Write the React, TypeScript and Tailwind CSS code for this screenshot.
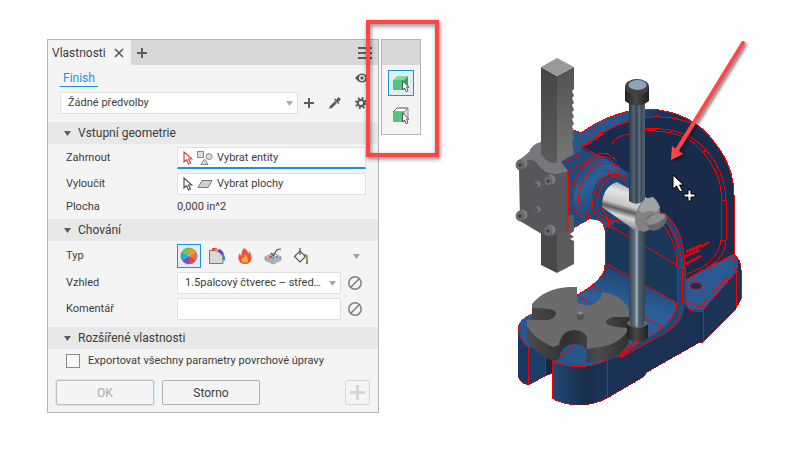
import { useState, type ReactNode } from 'react';

const DISC =
  'M577 287 L577 302 Q583 306 590 305 Q601 303 602 292 Q621 294 629 310 L629 317 L613 317 Q605 319 606 323 Q608 327 629 328 Q624 340 606 346 L587 349 L587 337 Q583 330 574 330 Q561 331 559 345 L553 347 Q533 338 527 326 L527 320 L548 320 Q556 318 556 313 Q555 308 532 308 L532 304 Q544 289 568 287 Z';

const Arrow = ({ className = '' }: { className?: string }) => (
  <svg viewBox="0 0 7 5" className={`h-[5px] w-[7px] ${className}`} aria-hidden="true">
    <path d="M0 0h7L3.500 5z" fill="currentColor" />
  </svg>
);

const Pointer = ({ color }: { color: string }) => (
  <svg viewBox="0 0 10 14" className="h-3.5 w-2.5 shrink-0" aria-hidden="true">
    <path
      d="M1 1v10l2.500-2.300 2 4.300 2-1-2-4h3.300z"
      fill="#fff"
      stroke={color}
      strokeWidth="1.200"
    />
  </svg>
);

const Section = ({ title, children }: { title: string; children: ReactNode }) => {
  const [open, setOpen] = useState(true);

  return (
    <section>
      <h2>
        <button
          type="button"
          aria-expanded={open}
          onClick={() => setOpen(!open)}
          className="flex h-[22px] w-full items-center gap-[7px] bg-[#e8e8e8] pl-4 text-[12px] text-[#3c3c3c]"
        >
          <Arrow className="text-[#5a5a5a]" />
          {title}
        </button>
      </h2>
      {open && children}
    </section>
  );
};

const Clear = () => (
  <button type="button" aria-label="Vymazat" className="ml-[7px] shrink-0 text-[#808080]">
    <svg viewBox="0 0 14 14" className="size-3.5" fill="none" stroke="currentColor" strokeWidth="1.500">
      <circle cx="7" cy="7" r="6.200" />
      <path d="M2.800 11.200l8.400-8.400" />
    </svg>
  </button>
);

const ColorWheel = () => (
  <svg viewBox="0 0 18 18" className="size-[18px]">
    <path d="M9 9V1a8 8 0 0 1 7 4z" fill="#f59a2c" />
    <path d="M9 9l7-4a8 8 0 0 1 0 8z" fill="#f4702f" />
    <path d="M9 9l7 4a8 8 0 0 1-7 4z" fill="#e0405a" />
    <path d="M9 9v8a8 8 0 0 1-7-4z" fill="#7b4fc0" />
    <path d="M9 9l-7 4a8 8 0 0 1 0-8z" fill="#1fb0c4" />
    <path d="M9 9L2 5a8 8 0 0 1 7-4z" fill="#7cc04d" />
    <circle cx="9" cy="9" r="8" fill="none" stroke="#777" strokeWidth=".6" />
  </svg>
);

const Coating = () => (
  <svg viewBox="0 0 18 18" className="size-[18px]" fill="none">
    <path d="M1.500 3.500H6q9 1 9 10v3H1.500z" fill="#d9d9d9" stroke="#777" />
    <path d="M4 2.500q3-1 5 0" stroke="#e8443a" strokeWidth="2.500" />
    <path d="M7 2.500q3 .5 4.500 2" stroke="#f5a52c" strokeWidth="2" />
    <path d="M10.500 3q3 1.500 4 4" stroke="#6c3fd0" strokeWidth="3" />
    <path d="M14.500 6.500q1.700 3 1.800 7" stroke="#2a8fe0" strokeWidth="2" />
  </svg>
);

const Flame = () => (
  <svg viewBox="0 0 16 18" className="h-[18px] w-4">
    <path
      d="M7 1q4 2 4 6 1-1 1-3 3 3 2.500 8-1 5-6.500 5T1.500 12Q1 9 3 6q0 2 1.500 3Q4 4 7 1z"
      fill="#e9543c"
    />
    <path d="M8 7q3 3 3 6t-3 3-3.500-3Q5 11 6 10l1 1q0-2 1-4z" fill="#f9a13a" />
  </svg>
);

const Engrave = () => (
  <svg viewBox="0 0 18 18" className="size-[18px]" fill="none">
    <path d="M1 10l8-4 8 4-8 5z" fill="#e4e4e4" stroke="#888" strokeWidth=".8" />
    <path d="M1 10v3l8 4 8-4v-3l-8 4z" fill="#b5b5b5" stroke="#888" strokeWidth=".7" />
    <path d="M3.500 10L7 8l2 2-2 2z" fill="#e85454" />
    <path d="M7 12l2-2 3 1-3 2z" fill="#38b7b0" />
    <path d="M10 10l3-1 2 1-2 1z" fill="#4b72d8" />
    <path d="M7 6l2.500 3L12 4q1-2 5-2" stroke="#555" strokeWidth="1.200" />
  </svg>
);

const Paint = () => (
  <svg viewBox="0 0 18 18" className="size-[18px]" fill="none">
    <path d="M2.500 9.500L8 4l5.500 5.500L8 15z" fill="#f4f4f4" stroke="#555" strokeWidth="1.200" />
    <path d="M8 1v7M12 8h3" stroke="#555" strokeWidth="1.200" />
    <path d="M15 8v3" stroke="#f08a2a" strokeWidth="2" />
    <path d="M15 11v3" stroke="#40c090" strokeWidth="2" />
    <path d="M15 14v3" stroke="#e9543c" strokeWidth="2" />
  </svg>
);

const finishTypes = [
  { label: 'Vzhled', icon: <ColorWheel /> },
  { label: 'Povlak', icon: <Coating /> },
  { label: 'Tepelné zpracování', icon: <Flame /> },
  { label: 'Textura', icon: <Engrave /> },
  { label: 'Nátěr', icon: <Paint /> },
];

const Header = () => (
  <header>
    <div className="flex h-[25px] items-stretch bg-[#d8d8d8]">
      <div className="flex items-center gap-2 bg-[#f4f4f4] pr-[7px] pl-1">
        <span className="text-[12px]">Vlastnosti</span>
        <button type="button" aria-label="Zavřít">
          <svg viewBox="0 0 10 10" className="size-2.5" stroke="#5c5c5c" strokeWidth="1.700">
            <path d="M1 1l8 8M9 1L1 9" />
          </svg>
        </button>
      </div>
      <button type="button" aria-label="Nová karta" className="px-1.5">
        <svg viewBox="0 0 10 10" className="size-2.5" stroke="#5c5c5c" strokeWidth="2">
          <path d="M5 0v10M0 5h10" />
        </svg>
      </button>
      <button type="button" aria-label="Nabídka" className="mr-[6px] ml-auto">
        <svg viewBox="0 0 14 12" className="h-3 w-3.5" stroke="#5c5c5c" strokeWidth="2">
          <path d="M0 1h14M0 6h14M0 11h14" />
        </svg>
      </button>
    </div>
    <div className="flex h-[27px] items-start justify-between pr-[9px] pl-3">
      <a
        href="#finish"
        className="mt-1 h-[18px] border-b border-[#1496d8] pr-[3px] pl-[3px] text-[12px] leading-[18px] text-[#1496d8]"
      >
        Finish
      </a>
      <button type="button" aria-label="Náhled" className="mt-2">
        <svg viewBox="0 0 14 10" className="h-2.5 w-3.5">
          <path d="M0 5Q7-4 14 5 7 14 0 5z" fill="#5c5c5c" />
          <circle cx="7" cy="5" r="3" fill="#f4f4f4" />
          <circle cx="7" cy="5" r="1.800" fill="#5c5c5c" />
        </svg>
      </button>
    </div>
    <div className="flex items-center pr-[11px] pb-2 pl-3">
      <div className="relative min-w-0 flex-1">
        <select
          aria-label="Předvolby"
          className="h-[22px] w-full appearance-none border border-[#e0e0e0] bg-white pl-[7px]"
        >
          <option>Žádné předvolby</option>
        </select>
        <Arrow className="pointer-events-none absolute top-[9px] right-[5px] text-[#a8a8a8]" />
      </div>
      <button type="button" aria-label="Přidat předvolbu" className="ml-[6px]">
        <svg viewBox="0 0 10 10" className="size-2.5" stroke="#5c5c5c" strokeWidth="2">
          <path d="M5 0v10M0 5h10" />
        </svg>
      </button>
      <button type="button" aria-label="Kapátko" className="ml-[15px]">
        <svg viewBox="0 0 12 12" className="size-3" fill="#5c5c5c">
          <path d="M0 12l1-3 5-5 2 2-5 5z" />
          <path d="M5 2.500l4.500 4.500 1-1-1.200-1.200L12 2.500 9.500 0 7.200 2.700 6 1.500z" />
        </svg>
      </button>
      <button type="button" aria-label="Nastavení" className="ml-[14px]">
        <svg viewBox="0 0 12 12" className="size-3" fill="none" stroke="#5c5c5c">
          <circle cx="6" cy="6" r="3.200" strokeWidth="2.200" />
          <circle cx="6" cy="6" r="5" strokeWidth="2" strokeDasharray="2 1.930" />
        </svg>
      </button>
    </div>
  </header>
);

const PropertiesPanel = () => {
  const [type, setType] = useState('Vzhled');

  return (
    <form className="border border-[#b4b6b6] bg-[#f4f4f4]" onSubmit={(e) => e.preventDefault()}>
      <Header />
      <Section title="Vstupní geometrie">
        <div className="grid grid-cols-[111px_1fr] items-center gap-y-1 pt-[3px] pr-3 pb-[5px] pl-[18px]">
          <span id="include">Zahrnout</span>
          <button
            type="button"
            aria-labelledby="include include-value"
            className="flex h-[22px] items-center gap-1 border border-b-2 border-[#e0e0e0] border-b-[#1496d8] bg-white pl-[5px]"
          >
            <Pointer color="#e8443a" />
            <svg viewBox="0 0 16 14" className="h-3.5 w-4" fill="#dcdcdc" stroke="#8a8a8a">
              <rect x=".5" y=".5" width="6" height="6" />
              <circle cx="12" cy="5.500" r="3" />
              <path d="M7.500 8l3.500 5.500H4z" />
            </svg>
            <span id="include-value">Vybrat entity</span>
          </button>
          <span id="exclude">Vyloučit</span>
          <button
            type="button"
            aria-labelledby="exclude exclude-value"
            className="flex h-[22px] items-center gap-1 border border-[#e0e0e0] bg-white pl-[5px]"
          >
            <Pointer color="#555" />
            <svg viewBox="0 0 16 14" className="h-3.5 w-4" fill="#d0d0d0" stroke="#777">
              <path d="M5 3.500h10l-4 7H1z" />
            </svg>
            <span id="exclude-value">Vybrat plochy</span>
          </button>
          <span className="leading-[15px]">Plocha</span>
          <output className="leading-[15px]">0,000 in^2</output>
        </div>
      </Section>
      <Section title="Chování">
        <div className="grid grid-cols-[111px_1fr] items-center gap-y-1 pt-[3px] pr-3 pb-[7px] pl-[18px]">
          <span id="type">Typ</span>
          <div className="flex items-center" role="group" aria-labelledby="type">
            <div className="flex gap-1">
              {finishTypes.map(({ label, icon }) => (
                <button
                  key={label}
                  type="button"
                  aria-label={label}
                  aria-pressed={type === label}
                  onClick={() => setType(label)}
                  className={`flex size-6 items-center justify-center border ${
                    type === label ? 'border-[#1496d8] bg-[#e2eef6]' : 'border-transparent'
                  }`}
                >
                  {icon}
                </button>
              ))}
            </div>
            <button type="button" aria-label="Další typy" className="mr-[6px] ml-auto">
              <Arrow className="text-[#a0a0a0]" />
            </button>
          </div>
          <label htmlFor="appearance">Vzhled</label>
          <div className="flex items-center pr-1">
            <div className="relative min-w-0 flex-1">
              <select
                id="appearance"
                className="h-[22px] w-full appearance-none border border-[#e0e0e0] bg-white pl-[7px]"
              >
                <option>1.5palcový čtverec – střed…</option>
              </select>
              <Arrow className="pointer-events-none absolute top-[9px] right-[5px] text-[#a8a8a8]" />
            </div>
            <Clear />
          </div>
          <label htmlFor="comment">Komentář</label>
          <div className="flex items-center pr-1">
            <input
              id="comment"
              type="text"
              className="h-[22px] min-w-0 flex-1 border border-[#e0e0e0] bg-white px-[7px]"
            />
            <Clear />
          </div>
        </div>
      </Section>
      <Section title="Rozšířené vlastnosti">
        <label className="flex items-center gap-2 pt-1 pl-[18px]">
          <input type="checkbox" className="size-3.5 appearance-none border border-[#8a8a8a] bg-[#f8f8f8] checked:bg-[#1496d8]" />
          Exportovat všechny parametry povrchové úpravy
        </label>
      </Section>
      <footer className="flex gap-2 px-2 pt-[11px] pb-[7px]">
        <button
          type="submit"
          disabled
          className="h-[25px] max-w-[98px] flex-1 rounded-xs border border-[#bcbfc1] text-[12px] text-[#a9a9a9] ring-1 ring-[#d5e8f2]"
        >
          OK
        </button>
        <button type="button" className="h-[25px] max-w-[98px] flex-1 rounded-xs border border-[#b0b0b0] text-[12px]">
          Storno
        </button>
        <button
          type="button"
          disabled
          aria-label="Použít a vytvořit nový"
          className="ml-auto flex size-[25px] items-center justify-center rounded-xs border border-[#d6d6d6]"
        >
          <svg viewBox="0 0 15 15" className="size-[15px]" stroke="#d6d6d6" strokeWidth="3">
            <path d="M7.500 0v15M0 7.500h15" />
          </svg>
        </button>
      </footer>
    </form>
  );
};

const Cube = ({ solid }: { solid?: boolean }) => (
  <svg viewBox="0 0 18 18" className="size-[18px]">
    {solid ? (
      <>
        <path d="M1 6l4-4h11l-4 4z" fill="#82d9a0" />
        <path d="M12 6l4-4v9l-4 5z" fill="#35a65f" />
      </>
    ) : (
      <>
        <path d="M1 6l4-4h11l-4 4z" fill="#fff" stroke="#555" />
        <path d="M12 6l4-4v9l-4 5z" fill="#e0e0e0" stroke="#777" strokeWidth=".8" />
      </>
    )}
    <path d="M1 6h11v10H1z" fill="#53c67c" />
    <path d="M10.500 7v9l2-2 1.500 3.500 2-.8-1.500-3.500H17z" fill="#fff" stroke="#444" strokeWidth=".9" />
  </svg>
);

const SelectionToolbar = () => (
  <div className="relative">
    <div className="border border-[#b4b6b6] bg-[#f4f4f4]" role="toolbar" aria-label="Výběr">
      <div className="h-[25px] bg-[#d8d8d8]" />
      <div className="flex flex-col items-center gap-[6px] pt-[5px] pb-[6px]">
        <button
          type="button"
          aria-label="Těleso"
          className="flex size-[26px] items-center justify-center border border-[#1496d8] bg-[#e2eef6]"
        >
          <Cube solid />
        </button>
        <button type="button" aria-label="Plocha" className="flex size-[26px] items-center justify-center">
          <Cube />
        </button>
      </div>
    </div>
    <div className="pointer-events-none absolute -top-[19px] -left-[15px] h-[137px] w-[73px] border-4 border-[#ff4545] drop-shadow-[1px_2px_2px_rgba(0,0,0,0.5)]" />
  </div>
);

const Bolt = ({ x, y, r = 5 }: { x: number; y: number; r?: number }) => (
  <g>
    <ellipse cx={x + r / 2} cy={y - r / 4} rx={r} ry={r} fill="#7c7d80" />
    <ellipse cx={x} cy={y} rx={r - 1} ry={r} fill="#6c6d70" stroke="#525356" strokeWidth=".6" />
    <circle cx={x} cy={y} r={r / 3} fill="#3c3d40" />
  </g>
);

const ArborPress = () => (
  <svg viewBox="421 39 379 411" className="h-auto w-full" role="img" aria-label="Model lisu">
    <defs>
      <linearGradient id="post">
        <stop offset="0" stopColor="#2d3742" />
        <stop offset=".3" stopColor="#526473" />
        <stop offset=".5" stopColor="#34424f" />
        <stop offset=".62" stopColor="#64758a" />
        <stop offset=".75" stopColor="#3d4c59" />
        <stop offset="1" stopColor="#53616d" />
      </linearGradient>
      <linearGradient id="postLow">
        <stop offset="0" stopColor="#35424e" />
        <stop offset=".35" stopColor="#5f707e" />
        <stop offset=".5" stopColor="#a9b8c4" />
        <stop offset=".6" stopColor="#506270" />
        <stop offset="1" stopColor="#35434f" />
      </linearGradient>
      <linearGradient id="rackLeft" x1="0" y1="0" x2="0" y2="1">
        <stop offset="0" stopColor="#454545" />
        <stop offset="1" stopColor="#5b5b5b" />
      </linearGradient>
      <linearGradient id="rackRight" x1="0" y1="0" x2="0" y2="1">
        <stop offset="0" stopColor="#515151" />
        <stop offset="1" stopColor="#777" />
      </linearGradient>
      <linearGradient id="hub" x1="0" y1="0" x2=".7" y2="1">
        <stop offset="0" stopColor="#1c3c68" />
        <stop offset=".4" stopColor="#2c6099" />
        <stop offset="1" stopColor="#1a365d" />
      </linearGradient>
      <linearGradient id="shaft" x1=".6" y1="0" x2=".3" y2="1">
        <stop offset="0" stopColor="#8e8e8e" />
        <stop offset=".25" stopColor="#e4e4e4" />
        <stop offset=".48" stopColor="#c6c6c6" />
        <stop offset=".58" stopColor="#5c5c5c" />
        <stop offset=".7" stopColor="#d8d8d8" />
        <stop offset="1" stopColor="#555" />
      </linearGradient>
      <linearGradient id="base">
        <stop offset="0" stopColor="#204a78" />
        <stop offset=".6" stopColor="#172d4a" />
        <stop offset="1" stopColor="#1b3459" />
      </linearGradient>
      <linearGradient id="floor" x1=".7" y1="0" x2=".3" y2="1">
        <stop offset="0" stopColor="#1c3f6a" />
        <stop offset=".35" stopColor="#2d5f99" />
        <stop offset="1" stopColor="#275487" />
      </linearGradient>
      <linearGradient id="rim" x1="0" x2="1">
        <stop offset="0" stopColor="#2a568b" />
        <stop offset=".45" stopColor="#29568c" />
        <stop offset=".65" stopColor="#1c3458" />
        <stop offset="1" stopColor="#172d4d" />
      </linearGradient>
      <linearGradient id="collar">
        <stop offset="0" stopColor="#222" />
        <stop offset=".45" stopColor="#474747" />
        <stop offset="1" stopColor="#202020" />
      </linearGradient>
      <linearGradient id="discSide">
        <stop offset="0" stopColor="#4b4b4b" />
        <stop offset=".4" stopColor="#303030" />
        <stop offset=".7" stopColor="#4a4a4a" />
        <stop offset="1" stopColor="#303030" />
      </linearGradient>
      <filter id="soft" x="-30%" y="-30%" width="160%" height="160%">
        <feDropShadow dx="2" dy="2" stdDeviation="1.500" floodOpacity=".5" />
      </filter>
    </defs>

    {/* casting */}
    <g strokeLinejoin="round">
      <path
        d="M530 150L545 140L574 130L581 133Q615 109 650 109Q693 112 715 143Q734 167 734 195V254Q741 260 741 270V299L735 310L703 342L698 343L647 372L643 377L607 398Q594 405 579 405Q560 404 552 398V373L545 376L528 385Q519 382 518 375V328Q520 319 532 314L577 295Q605 281 605 265V230Q603 217 589 219L568 231Z"
        fill="url(#rim)"
        stroke="#f00"
        shapeRendering="crispEdges"
      />
      <path
        d="M581 148L596 138Q625 118 650 117Q693 117 713 145Q730 165 733 195V253L685 279L650 240L628 180Z"
        fill="#182d4d"
      />
      <path d="M645 128Q690 126 712 155Q724 175 726 198V241Q724 258 707 266L685 277V250Q682 222 660 212L645 200Z" fill="#182b4b" />
      <path d="M605 228L629 215Q650 208 662 219Q677 239 677 265V303L645 286L605 266Z" fill="#1a3859" />
      <path d="M532 314Q519 319 518 328L528 347L552 361Q579 372 607 360L641 342Q676 326 677 303L645 286L605 266Q604 281 577 295Z" fill="url(#floor)" />
      <path d="M518 328Q521 342 528 347V385Q519 382 518 375Z" fill="#1a3962" />
      <path d="M528 347L545 352V376L528 385Z" fill="#1b3e69" />
      <path d="M545 352L552 361V373L545 376Z" fill="#152844" />
      <path d="M552 361Q579 373 607 360V398Q579 412 552 398Z" fill="url(#base)" />
      <path d="M607 360L641 346Q683 327 684 300V278L703 310V342L698 343L647 372L643 377L607 398Z" fill="#1a3154" />
      <path d="M677 303V265Q677 232 660 216L664 212Q685 230 685 265V303Q685 320 669 332L620 357L607 360L641 342Q677 325 677 303Z" fill="#204774" />
      <path d="M685 280L734 254Q741 260 735 273L704 310Q686 313 685 301Z" fill="#2b5a92" />
      <path d="M703 310L735 273L741 266V299L735 310L703 342Z" fill="#1a3356" />
      <ellipse cx="696" cy="286" rx="6" ry="3.500" fill="#18304f" stroke="#f00" />
    </g>

    {/* upper bore and hub */}
    <path d="M555 167L582 150L600 155L618 165L629 175V225L609 222L589 219L568 231V172Z" fill="#204b7b" />
    <path d="M574 197Q576 168 600 157L629 173V217L609 221Q602 217 589 217Q574 216 574 197Z" fill="url(#hub)" />
    <path d="M592 203Q590 178 615 173L630 180V225L609 220Q592 217 592 203Z" fill="#1e4675" />

    <g fill="none" stroke="#f40000" strokeWidth="1" shapeRendering="crispEdges">
      <path d="M592 127L603 134M581 147L605 131Q630 118 653 117Q677 116 695 125M590 143L582 147L600 156M603 134L590 143" />
      <path d="M612 144Q616 136 629 134M645 129Q685 126 706 150Q725 171 726 200V240Q725 256 712 265L687 279" />
      <path d="M645 131Q684 129 703 152Q720 173 721 192V240Q719 256 703 267L685 275M721 200h5M721 240h5M711 264v6M706 150l-4 3" />
      <path d="M557 167L582 153M568 231V172L597 155Q607 149 617 162" />
      <path d="M618 171Q612 155 600 157Q582 163 575 182Q570 207 578 215Q583 218 588 219" />
      <path d="M617 167Q606 158 591 170Q576 187 579 204Q582 211 588 213V219" />
      <path d="M628 178Q612 170 603 178Q593 189 592 207Q594 218 608 220" />
      <path d="M628 183Q616 171 605 182Q597 194 597 206Q598 216 609 219" />
      <path d="M602 207Q605 217 611 222L620 220M608 220h5v7h-5zM603 169h5v2h-5z" />
      <path d="M605 223L677 265M605 263L677 303M605 223V267Q603 281 577 295L592 304M592 286L602 292" />
      <path d="M645 318L665 328M677 303V267Q677 239 660 222M682 303V267Q681 235 661 218M685 303V267Q684 224 660 212M677 267h8M677 303h5" />
      <path d="M677 303Q676 323 640 342L620 357M682 303Q683 321 665 333L620 358M620 358L631 343M620 355L635 342" />
      <path d="M685 280L734 254Q740 262 736 272L703 310V342M732 257Q740 265 731 273L700 307M686 300L702 308M686 303Q688 314 703 311M736 272V308" />
      <path d="M518 328Q521 343 528 347V385M545 352V376M552 398V361Q579 373 607 360V398M607 360L622 350M552 361L569 351Q573 347 572 342" />
    </g>
    <g stroke="#f00" strokeDasharray="3 .5">
      <path d="M686 252L702 245" strokeWidth="3" />
      <path d="M686 256L700 250" strokeWidth="2.500" />
      <path d="M686 264L701 256" strokeWidth="2.500" />
      <path d="M701 247L709 242" strokeWidth="2" />
    </g>

    {/* rack */}
    <path d="M541 215V265L557 273V215Z" fill="#484848" />
    <path d="M557 215V273L574 264V241L570 239L574 237L570 234L574 231V215Z" fill="#5b5b5b" />
    <path d="M541 67L557 76V165L541 157Z" fill="url(#rackLeft)" />
    <path
      d="M557 76L574 67V89L572 91L574 96L572 98L574 103L572 105L574 110L572 112L574 117L572 119L574 124L572 126L574 131L572 133L574 138L572 141L574 154L557 164Z"
      fill="url(#rackRight)"
    />
    <path d="M541 67L557 58L574 67L557 76Z" fill="#999" />

    {/* cover plate */}
    <path d="M530 151Q532 144 541 142V158L557 165L548 171Z" fill="#77777b" />
    <path
      d="M519 170L517 161L529 154Q538 153 542 161Q548 168 561 165L568 172V231L550 237L540 233L520 221Z"
      fill="#56575a"
    />
    <path d="M521 159L530 151Q540 151 545 159Q550 165 561 162L568 171L558 174Q546 175 538 165Q534 157 521 162Z" fill="#77787c" />
    <path d="M568 172V231" stroke="#f00" />
    <Bolt x={520} y={165} />
    <Bolt x={548} y={181} />
    <Bolt x={520} y={216} />
    <Bolt x={548} y={231} />
    <Bolt x={536} y={185} r={3} />
    <Bolt x={536} y={210} r={3} />

    {/* work table */}
    {[14, 12, 10, 8, 6, 4, 2].map((dy) => (
      <path key={dy} d={DISC} transform={`translate(0 ${dy})`} fill="url(#discSide)" />
    ))}
    <path d={DISC} fill="#6b6b6b" />
    <path d="M577 313l3-2 4 2v6l-4 2-3-2z" fill="#555" />
    <path d="M577 313l3-2 4 2-4 2z" fill="#898989" />

    {/* spindle and lever */}
    <path d="M629 225h16v108h-16z" fill="url(#postLow)" />
    <path d="M627 324v14q10 8 21 0v-14q-10 6-21 0z" fill="url(#collar)" />
    <path d="M627 324q1-4 3-3v4q7 4 14 0v-4q4 0 4 3-10 8-21 0z" fill="#686868" />
    <path d="M602 207Q602 187 617 182L654 202V228L636 231Z" fill="url(#shaft)" />
    <path d="M629 100h16v100q-8 7-16 1z" fill="url(#post)" />
    <path d="M625 86v15q12 9 24 0V86z" fill="url(#collar)" />
    <ellipse cx="637" cy="87" rx="12" ry="8" fill="#414141" />
    <ellipse cx="637.500" cy="85" rx="9" ry="5" fill="#8ca5bd" />
    <path d="M645 199L653 197Q660 202 660 211Q659 229 643 232Q634 228 635 218Q637 205 645 199Z" fill="#828282" />
    <path d="M645 199L653 197L660 207L656 212Q648 209 643 213L638 210Z" fill="#a2a2a2" />
    <path d="M646 218Q655 210 667 217Q665 230 652 231Q645 226 646 218Z" fill="#66686a" />
    <path d="M646 220Q656 210 666 215Q662 224 648 225Z" fill="#8d8f90" />

    {/* callout arrow and cursor */}
    <g filter="url(#soft)">
      <path d="M743 43L677 150" stroke="#ff4545" strokeWidth="4" strokeLinecap="round" />
      <path d="M671 160L672 146L683 154Z" fill="#ff4545" />
    </g>
    <path d="M673 175v14l3.500-3 3.500 6 2.500-1.500-3-5.500h4z" fill="#fff" stroke="#000" />
    <path d="M688 190h3v4h4v3h-4v4h-3v-4h-4v-3h4z" fill="#fff" stroke="#000" />
  </svg>
);

const App = () => (
  <main className="grid min-h-screen grid-cols-[minmax(0,332fr)_42px_minmax(0,379fr)] items-start bg-white pt-[39px] pl-[47px] font-[Roboto,sans-serif] text-[11px] leading-4 text-[#3c3c3c]">
    <PropertiesPanel />
    <div className="pl-0.5">
      <SelectionToolbar />
    </div>
    <ArborPress />
  </main>
);

export default App;
